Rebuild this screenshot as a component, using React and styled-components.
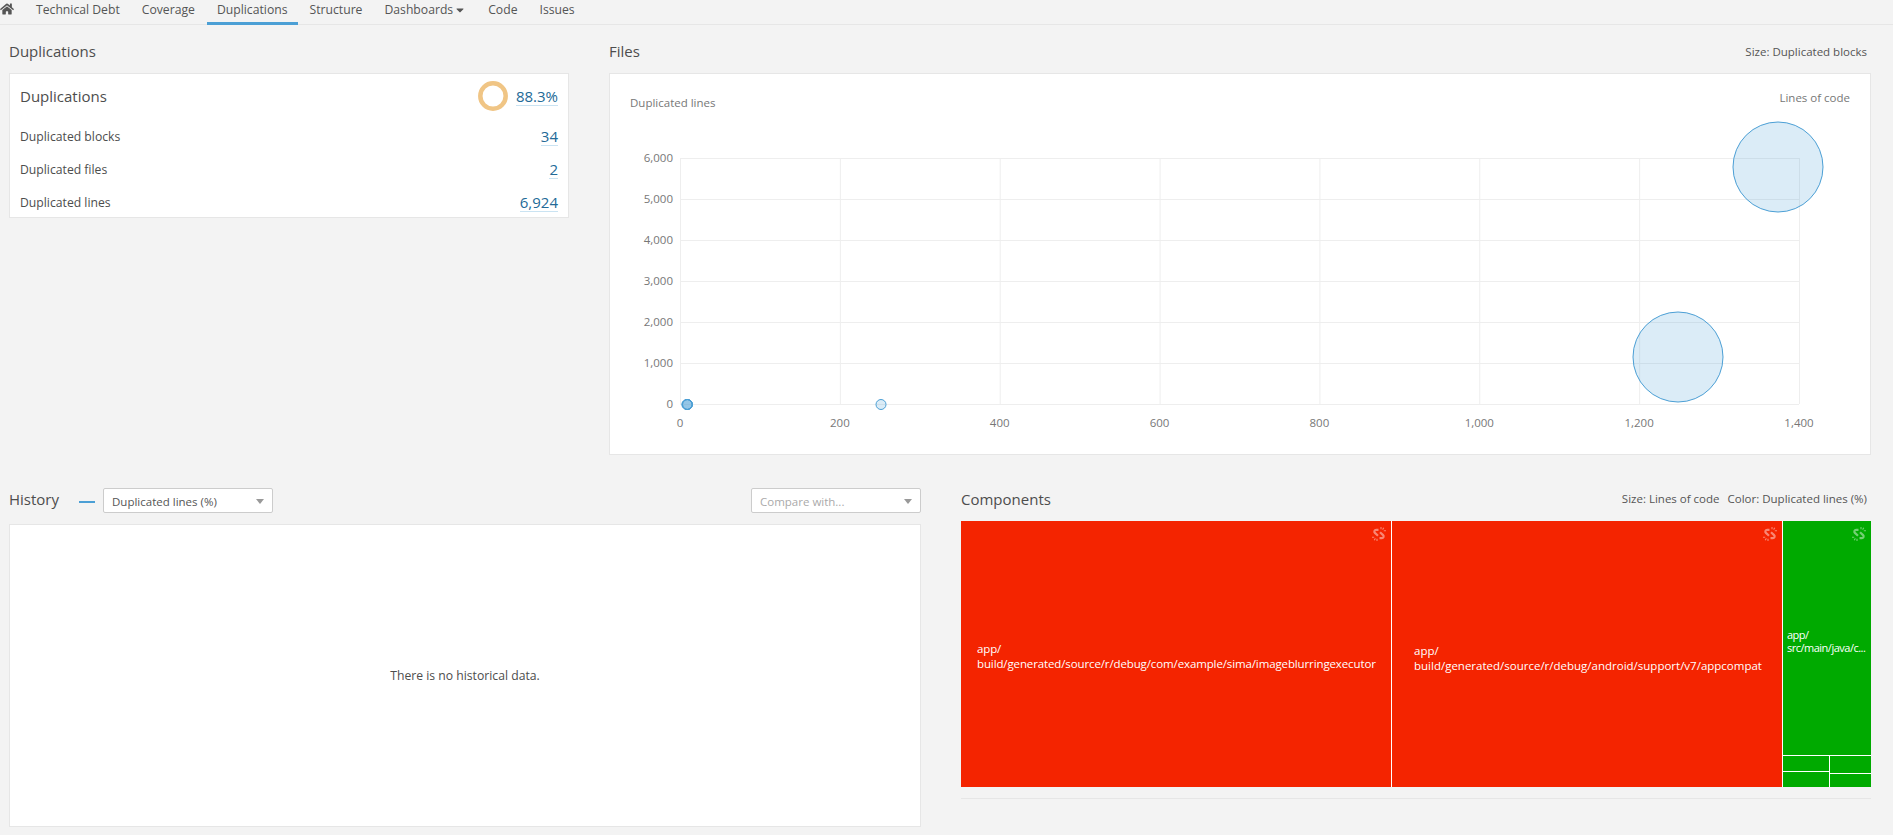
import React from "react";
import styled, { createGlobalStyle } from "styled-components";
import { FaHome, FaCaretDown } from "react-icons/fa";

const tabs = ["Technical Debt", "Coverage", "Duplications", "Structure", "Dashboards", "Code", "Issues"];
const measures = [
    { label: "Duplicated blocks", value: "34" },
    { label: "Duplicated files", value: "2" },
    { label: "Duplicated lines", value: "6,924" },
];

function Chart() {
    const xs = [0, 200, 400, 600, 800, 1000, 1200, 1400];
    const ys = [0, 1000, 2000, 3000, 4000, 5000, 6000];
    const px = (v) => 70 + v * 0.79928;
    const py = (v) => 330 - v * 0.041;
    return (
        <svg width="1260" height="380" style={{ display: "block" }}>
            {ys.map((v) => (
                <g key={v}>
                    <line x1="70" x2="1189" y1={py(v) + 0.5} y2={py(v) + 0.5} stroke="#eeeeee" />
                    <text x="63" y={py(v) + 4} textAnchor="end" fontSize="11.5" fill="#777">{v.toLocaleString("en-US")}</text>
                </g>
            ))}
            {xs.map((v) => (
                <g key={v}>
                    <line x1={px(v) + 0.5} x2={px(v) + 0.5} y1={py(6000)} y2={py(0)} stroke="#eeeeee" />
                    <text x={px(v)} y="353" textAnchor="middle" fontSize="11.5" fill="#777">{v.toLocaleString("en-US")}</text>
                </g>
            ))}
            <circle cx="77" cy="330.5" r="5" fill="#4b9fd5" fillOpacity="0.2" stroke="#4b9fd5" />
            <circle cx="77" cy="330.5" r="5" fill="#4b9fd5" fillOpacity="0.2" stroke="#4b9fd5" />
            <circle cx="77.5" cy="330.5" r="5" fill="#4b9fd5" fillOpacity="0.2" stroke="#4b9fd5" />
            <circle cx="77.5" cy="330.5" r="5" fill="#4b9fd5" fillOpacity="0.2" stroke="#4b9fd5" />
            <circle cx="271" cy="330.5" r="5" fill="#4b9fd5" fillOpacity="0.2" stroke="#4b9fd5" />
            <circle cx="1068" cy="283" r="45" fill="#4b9fd5" fillOpacity="0.2" stroke="#4b9fd5" />
            <circle cx="1168" cy="93" r="45" fill="#4b9fd5" fillOpacity="0.2" stroke="#4b9fd5" />
        </svg>
    );
}

function Donut() {
    return (
        <svg width="30" height="30">
            <circle cx="15" cy="15" r="12.7" fill="none" stroke="#f0c585" strokeWidth="4.5" />
        </svg>
    );
}

function BrokenLink() {
    return (
        <svg width="14" height="14" viewBox="0 0 14 14" fill="none" stroke="currentColor" strokeWidth="2.2">
            <path d="M6.5 2.8H4.2a1.8 1.8 0 0 0-1.3 3.1L6 8.8" />
            <path d="M7.5 11.2h2.3a1.8 1.8 0 0 0 1.3-3.1L8 5.2" />
            <path strokeWidth="1.1" d="M9 0v2.2M11.8 .8l-1.2 1.8M14 3.8h-2.2M5 14v-2.2M2.2 13.2l1.2-1.8M0 10.2h2.2" />
        </svg>
    );
}

function App() {
    return (
        <>
            <GlobalStyle />
            <Nav>
                <Home><FaHome /></Home>
                <Tabs>
                    {tabs.map((tab) => (
                        <Tab key={tab} $active={tab === "Duplications"}>
                            {tab}
                            {tab === "Dashboards" && <FaCaretDown size={12} />}
                        </Tab>
                    ))}
                </Tabs>
            </Nav>

            <Page>
                <TopRow>
                    <LeftCol>
                        <TitleRow>
                            <Title>Duplications</Title>
                        </TitleRow>
                        <Card>
                            <CardHead>
                                <CardTitle>Duplications</CardTitle>
                                <HeadValue>
                                    <Donut />
                                    <Value>88.3%</Value>
                                </HeadValue>
                            </CardHead>
                            {measures.map((m) => (
                                <Row key={m.label}>
                                    <span>{m.label}</span>
                                    <Value>{m.value}</Value>
                                </Row>
                            ))}
                        </Card>
                    </LeftCol>
                    <RightCol>
                        <TitleRow>
                            <Title>Files</Title>
                            <Note>Size: Duplicated blocks</Note>
                        </TitleRow>
                        <ChartCard>
                            <AxisTitles>
                                <YAxisTitle>Duplicated lines</YAxisTitle>
                                <span>Lines of code</span>
                            </AxisTitles>
                            <Chart />
                        </ChartCard>
                    </RightCol>
                </TopRow>

                <BottomRow>
                    <HistoryCol>
                        <HistoryBar>
                            <HistoryTitle>History</HistoryTitle>
                            <Dash />
                            <Select $width={170}>
                                Duplicated lines (%)
                                <Arrow />
                            </Select>
                            <Select $width={170} $placeholder $push>
                                Compare with...
                                <Arrow />
                            </Select>
                        </HistoryBar>
                        <HistoryCard>There is no historical data.</HistoryCard>
                    </HistoryCol>

                    <ComponentsCol>
                        <ComponentsHead>
                            <Title>Components</Title>
                            <Notes>
                                <Note>Size: Lines of code</Note>
                                <Note>Color: Duplicated lines (%)</Note>
                            </Notes>
                        </ComponentsHead>
                        <Treemap>
                            <Tile $width={430} $top={121} $left={16} $spacing={-0.12}>
                                <LinkIcon><BrokenLink /></LinkIcon>
                                app/<br />build/generated/source/r/debug/com/example/sima/imageblurringexecutor
                            </Tile>
                            <Tile $width={390} $top={123} $left={22} $spacing={0}>
                                <LinkIcon><BrokenLink /></LinkIcon>
                                app/<br />build/generated/source/r/debug/android/support/v7/appcompat
                            </Tile>
                            <GreenColumn>
                                <GreenTile>
                                    <LinkIcon><BrokenLink /></LinkIcon>
                                    app/<br />src/main/java/c...
                                </GreenTile>
                                <SmallTiles>
                                    <SmallColumn $width={46}>
                                        <SmallTile $height={15} />
                                        <SmallTile $height={15} />
                                    </SmallColumn>
                                    <SmallColumn $width={41}>
                                        <SmallTile $height={17} />
                                        <SmallTile $height={13} />
                                    </SmallColumn>
                                </SmallTiles>
                            </GreenColumn>
                        </Treemap>
                        <Rule />
                    </ComponentsCol>
                </BottomRow>
            </Page>
        </>
    );
}

export default App;

const GlobalStyle = createGlobalStyle`
    html, body {
        margin: 0;
        height: 100%;
        background: #f3f3f3;
        font-family: "Open Sans", "Liberation Sans", sans-serif;
        font-size: 12.2px;
        color: #4d4d4d;
        overflow: hidden;
    }
    svg text {
        font-family: "Open Sans", "Liberation Sans", sans-serif;
    }
`
const Nav = styled.div`
    display: flex;
    height: 24px;
    border-bottom: 1px solid #e6e6e6;
`
const Home = styled.div`
    width: 26px;
    padding-top: 2px;
    font-size: 14px;
    color: #555;
    line-height: 14px;
`
const Tabs = styled.div`
    display: flex;
    gap: 2px;
`
const Tab = styled.div(({$active}) => `
    display: flex;
    align-items: center;
    gap: 1px;
    padding: 0 10px 3px;
    box-sizing: border-box;
    height: 25px;
    color: #555;
    border-bottom: 3px solid ${$active ? "#4b9fd5" : "transparent"};
`)
const Page = styled.div`
    padding: 0 22px 0 9px;
`
const TopRow = styled.div`
    display: flex;
    justify-content: space-between;
`
const LeftCol = styled.div`
    width: 560px;
`
const RightCol = styled.div`
    width: 1262px;
`
const Title = styled.div`
    font-size: 15px;
    line-height: 20px;
    color: #4d4d4d;
`
const TitleRow = styled.div`
    display: flex;
    justify-content: space-between;
    align-items: center;
    padding: 16px 4px 12px 0;
    height: 20px;
`
const Note = styled.span`
    font-size: 11.5px;
    color: #555;
`
const Card = styled.div`
    box-sizing: border-box;
    height: 145px;
    background: #fff;
    border: 1px solid #e6e6e6;
    padding: 0 10px;
`
const CardHead = styled.div`
    display: flex;
    justify-content: space-between;
    align-items: center;
    box-sizing: border-box;
    height: 46px;
    padding-bottom: 2px;
`
const CardTitle = styled.div`
    font-size: 15px;
`
const HeadValue = styled.div`
    display: flex;
    align-items: center;
    gap: 8px;
`
const Row = styled.div`
    display: flex;
    justify-content: space-between;
    align-items: center;
    height: 33px;
`
const Value = styled.span`
    font-size: 15px;
    line-height: 18px;
    color: #236a97;
    border-bottom: 1px solid #cae3f2;
`
const ChartCard = styled.div`
    position: relative;
    box-sizing: border-box;
    height: 382px;
    background: #fff;
    border: 1px solid #e6e6e6;
`
const AxisTitles = styled.div`
    position: absolute;
    top: 16px;
    left: 20px;
    right: 20px;
    display: flex;
    justify-content: space-between;
    font-size: 11.5px;
    color: #777;
`
const YAxisTitle = styled.span`
    margin-top: 5px;
`
const BottomRow = styled.div`
    display: flex;
    justify-content: space-between;
    margin-top: 33px;
`
const HistoryCol = styled.div`
    width: 912px;
`
const HistoryBar = styled.div`
    display: flex;
    align-items: center;
    height: 25px;
    margin-bottom: 11px;
`
const HistoryTitle = styled(Title)`
    margin-top: -4px;
`
const Dash = styled.div`
    width: 16px;
    height: 2px;
    margin: 2px 8px 0 20px;
    background: #4b9fd5;
`
const Select = styled.div(({$width, $placeholder, $push}) => `
    position: relative;
    box-sizing: border-box;
    width: ${$width}px;
    height: 25px;
    line-height: 25px;
    padding-left: 8px;
    font-size: 11.5px;
    background: #fff;
    border: 1px solid #ccc;
    border-radius: 2px;
    color: ${$placeholder ? "#aaa" : "#555"};
    ${$push ? "margin-left: auto;" : ""}
`)
const Arrow = styled.i`
    position: absolute;
    top: 10px;
    right: 8px;
    border-top: 5px solid #999;
    border-left: 4px solid transparent;
    border-right: 4px solid transparent;
`
const HistoryCard = styled.div`
    box-sizing: border-box;
    height: 303px;
    display: flex;
    align-items: center;
    justify-content: center;
    background: #fff;
    border: 1px solid #e6e6e6;
`
const ComponentsCol = styled.div`
    width: 910px;
`
const ComponentsHead = styled.div`
    display: flex;
    justify-content: space-between;
    align-items: center;
    box-sizing: border-box;
    height: 33px;
    padding: 0 4px 12px 0;
`
const Notes = styled.div`
    display: flex;
    gap: 8px;
`
const Treemap = styled.div`
    display: flex;
    height: 266px;
    gap: 1px;
    background: #fff;
`
const Tile = styled.div(({$width, $top, $left, $spacing}) => `
    position: relative;
    box-sizing: border-box;
    flex: 0 0 ${$width}px;
    padding: ${$top}px 0 0 ${$left}px;
    background: #f42400;
    color: #fff;
    font-size: 11.5px;
    letter-spacing: ${$spacing}px;
    line-height: 14.5px;
    white-space: nowrap;
    overflow: hidden;
`)
const LinkIcon = styled.span`
    position: absolute;
    top: 6px;
    right: 5px;
    line-height: 0;
    color: rgba(255, 255, 255, 0.45);
`
const GreenColumn = styled.div`
    flex: 1;
    min-width: 0;
    display: flex;
    flex-direction: column;
    gap: 1px;
`
const GreenTile = styled.div`
    position: relative;
    flex: 0 0 234px;
    box-sizing: border-box;
    padding: 107px 0 0 4px;
    background: #00aa00;
    color: #fff;
    font-size: 11px;
    letter-spacing: -0.5px;
    line-height: 13px;
    white-space: nowrap;
    overflow: hidden;
`
const SmallTiles = styled.div`
    flex: 1;
    display: flex;
    gap: 1px;
`
const SmallColumn = styled.div(({$width}) => `
    flex: 0 0 ${$width}px;
    display: flex;
    flex-direction: column;
    gap: 1px;
`)
const SmallTile = styled.div(({$height}) => `
    flex: 0 0 ${$height}px;
    background: #00aa00;
`)
const Rule = styled.div`
    height: 1px;
    margin-top: 11px;
    background: #e6e6e6;
`
